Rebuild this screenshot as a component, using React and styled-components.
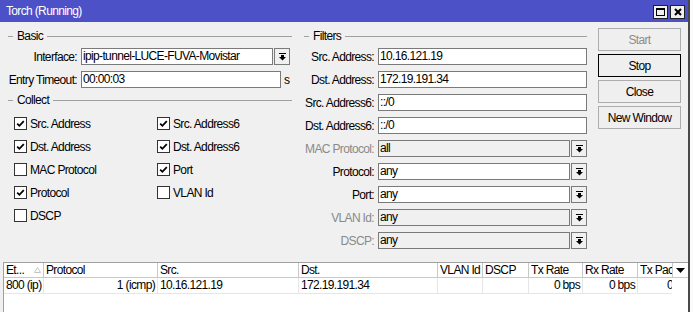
import React from "react";
import styled, { createGlobalStyle } from "styled-components";

const FONT = `"Liberation Sans", Arial, sans-serif`;

const Global = createGlobalStyle`
  html, body { margin: 0; padding: 0; background: #ffffff; }
  body { font-family: ${FONT}; font-size: 12px; letter-spacing: -0.65px; color: #000; }
  * { box-sizing: border-box; }
`;

const Screen = styled.div`
  display: flex;
  width: 693px;
  height: 312px;
  overflow: hidden;
`;

const Window = styled.div`
  width: 690px;
  height: 312px;
  display: flex;
  flex-direction: column;
  background: #f0f0f0;
  border-right: 2px solid #4a4a4a;
`;

const Outside = styled.div`
  flex: 1;
  background: #fbfbfb;
`;

const TitleBar = styled.div`
  height: 22px;
  flex: none;
  display: flex;
  align-items: center;
  justify-content: space-between;
  background: #4c51c8;
  color: #fff;
  padding: 0 3px 0 6px;
`;

const TitleText = styled.span`
  line-height: 22px;
`;

const TitleButtons = styled.div`
  display: flex;
  gap: 2px;
  margin-top: 1px;
`;

const TitleButton = styled.div`
  width: 15px;
  height: 14px;
  background: #f0f0f0;
  border: 1px solid #202020;
  display: flex;
  align-items: center;
  justify-content: center;
`;

const Body = styled.div`
  flex: 1;
  display: flex;
  flex-direction: column;
  min-height: 0;
`;

const TopArea = styled.div`
  height: 240px;
  flex: none;
  display: flex;
  padding: 7px 0 0 8px;
`;

const LeftCol = styled.div`
  width: 284px;
  display: flex;
  flex-direction: column;
`;

const FiltersCol = styled.div`
  width: 283px;
  margin-left: 12px;
  display: flex;
  flex-direction: column;
`;

const ButtonsCol = styled.div`
  width: 83px;
  margin-left: 11px;
  margin-top: -1px;
  display: flex;
  flex-direction: column;
  gap: 3px;
`;

const GroupHeader = styled.div`
  height: 14px;
  display: flex;
  align-items: center;
  margin-top: ${(p) => p.$mt ?? 0}px;
  margin-bottom: 5px;
  &::before {
    content: "";
    width: 5px;
    height: 1px;
    background: #a0a0a0;
  }
  &::after {
    content: "";
    flex: 1;
    height: 1px;
    background: #a0a0a0;
  }
`;

const GroupTitle = styled.span`
  padding: 0 4px;
  line-height: 14px;
`;

const Rows = styled.div`
  display: flex;
  flex-direction: column;
  gap: 6px;
  margin-right: ${(p) => p.$mr ?? 0}px;
`;

const FieldRow = styled.div`
  display: flex;
  align-items: center;
  height: 17px;
`;

const Label = styled.label`
  width: ${(p) => p.$w}px;
  flex: none;
  text-align: right;
  white-space: nowrap;
  margin-right: 4px;
  color: ${(p) => (p.$disabled ? "#8a8a8a" : "#000")};
`;

const Input = styled.div`
  height: 17px;
  flex: ${(p) => (p.$w ? "none" : "1")};
  width: ${(p) => (p.$w ? `${p.$w}px` : "auto")};
  border: 1px solid #7a7a7a;
  background: ${(p) => (p.$disabled ? "#f0f0f0" : "#ffffff")};
  padding: 0 1px;
  line-height: 15px;
  white-space: nowrap;
  overflow: hidden;
`;

const DropButton = styled.div`
  width: 16px;
  height: 17px;
  flex: none;
  margin-left: 1px;
  border: 1px solid #7a7a7a;
  background: #f0f0f0;
  display: flex;
  align-items: center;
  justify-content: center;
`;

const Unit = styled.span`
  margin-left: 3px;
`;

const CheckGrid = styled.div`
  display: grid;
  grid-template-columns: 143px 1fr;
  grid-auto-rows: 23px;
  padding-left: 6px;
`;

const CheckItem = styled.div`
  display: flex;
  align-items: center;
`;

const Box = styled.div`
  width: 13px;
  height: 13px;
  border: 1px solid #333333;
  background: #fff;
  display: flex;
  align-items: center;
  justify-content: center;
  margin-right: 3px;
`;

const Button = styled.div`
  height: 23px;
  display: flex;
  align-items: center;
  justify-content: center;
  background: #efefef;
  border: 1px solid ${(p) => (p.$default ? "#000000" : "#adadad")};
  color: ${(p) => (p.$disabled ? "#8c8c8c" : "#000")};
`;

const Table = styled.div`
  flex: 1;
  margin-left: 3px;
  display: flex;
  background: #ffffff;
  border-left: 1px solid #a0a0a0;
  border-top: 1px solid #a0a0a0;
  min-height: 0;
`;

const Viewport = styled.div`
  flex: 1;
  overflow: hidden;
  display: flex;
  flex-direction: column;
`;

const SideStrip = styled.div`
  width: 16px;
  flex: none;
  background: #fff;
`;

const MenuBox = styled.div`
  height: 15px;
  border-left: 1px solid #c8c8c8;
  border-bottom: 1px solid #c8c8c8;
  display: flex;
  align-items: center;
  justify-content: center;
`;

const HeaderRow = styled.div`
  display: flex;
  height: 15px;
  border-bottom: 1px solid #c8c8c8;
  width: max-content;
`;

const DataRow = styled.div`
  display: flex;
  height: 16px;
  border-bottom: 1px solid #e6e6e6;
  width: max-content;
`;

const HeadCell = styled.div`
  width: ${(p) => p.$w}px;
  flex: none;
  border-right: 1px solid #c8c8c8;
  padding: 0 2px;
  line-height: 14px;
  white-space: nowrap;
  overflow: hidden;
  display: flex;
  align-items: center;
  justify-content: space-between;
`;

const Cell = styled.div`
  width: ${(p) => p.$w}px;
  flex: none;
  border-right: 1px solid #e6e6e6;
  padding: 0 2px;
  line-height: 15px;
  white-space: nowrap;
  overflow: hidden;
  text-align: ${(p) => (p.$right ? "right" : "left")};
`;

const DropIcon = () => (
  <svg width="7" height="8" viewBox="0 0 7 8">
    <rect x="0" y="0" width="7" height="1" fill="#000" />
    <rect x="2" y="2" width="3" height="2" fill="#000" />
    <polygon points="0,4 7,4 3.5,7.6" fill="#000" />
  </svg>
);

const Tick = () => (
  <svg width="9" height="9" viewBox="0 0 9 9">
    <path d="M1.2 4.6 L3.4 6.8 L7.8 2.2" stroke="#000" strokeWidth="1.8" fill="none" />
  </svg>
);

const COLS = [
  { key: "et", title: "Et...", w: 40, sort: true },
  { key: "proto", title: "Protocol", w: 114, right: true },
  { key: "src", title: "Src.", w: 141 },
  { key: "dst", title: "Dst.", w: 139 },
  { key: "vlan", title: "VLAN Id", w: 45 },
  { key: "dscp", title: "DSCP", w: 46 },
  { key: "tx", title: "Tx Rate", w: 54, right: true },
  { key: "rx", title: "Rx Rate", w: 55, right: true },
  { key: "txp", title: "Tx Packet Rate", w: 58, right: true },
  { key: "rxp", title: "Rx Packet Rate", w: 80, right: true },
];

const ROWS = [
  {
    et: "800 (ip)",
    proto: "1 (icmp)",
    src: "10.16.121.19",
    dst: "172.19.191.34",
    vlan: "",
    dscp: "",
    tx: "0 bps",
    rx: "0 bps",
    txp: "0 pps",
    rxp: "0 pps",
  },
];

const CHECKS = [
  ["Src. Address", true],
  ["Src. Address6", true],
  ["Dst. Address", true],
  ["Dst. Address6", true],
  ["MAC Protocol", false],
  ["Port", true],
  ["Protocol", true],
  ["VLAN Id", false],
  ["DSCP", false],
];

const FILTERS = [
  { label: "Src. Address:", value: "10.16.121.19" },
  { label: "Dst. Address:", value: "172.19.191.34" },
  { label: "Src. Address6:", value: "::/0" },
  { label: "Dst. Address6:", value: "::/0" },
  { label: "MAC Protocol:", value: "all", drop: true, disabled: true },
  { label: "Protocol:", value: "any", drop: true },
  { label: "Port:", value: "any", drop: true },
  { label: "VLAN Id:", value: "any", drop: true, disabled: true },
  { label: "DSCP:", value: "any", drop: true, disabled: true },
];

export default function App() {
  return (
    <>
      <Global />
      <Screen>
        <Window>
          <TitleBar>
            <TitleText>Torch (Running)</TitleText>
            <TitleButtons>
              <TitleButton>
                <svg width="9" height="8" viewBox="0 0 9 8">
                  <rect x="0.5" y="0.5" width="8" height="7" fill="none" stroke="#000" />
                  <rect x="0" y="0" width="9" height="2" fill="#000" />
                </svg>
              </TitleButton>
              <TitleButton>
                <svg width="8" height="8" viewBox="0 0 8 8">
                  <path d="M1 1 L7 7 M7 1 L1 7" stroke="#000" strokeWidth="2" />
                </svg>
              </TitleButton>
            </TitleButtons>
          </TitleBar>
          <Body>
            <TopArea>
              <LeftCol>
                <GroupHeader>
                  <GroupTitle>Basic</GroupTitle>
                </GroupHeader>
                <Rows $mr={2}>
                  <FieldRow>
                    <Label $w={69}>Interface:</Label>
                    <Input>ipip-tunnel-LUCE-FUVA-Movistar</Input>
                    <DropButton>
                      <DropIcon />
                    </DropButton>
                  </FieldRow>
                  <FieldRow>
                    <Label $w={69}>Entry Timeout:</Label>
                    <Input $w={200}>00:00:03</Input>
                    <Unit>s</Unit>
                  </FieldRow>
                </Rows>
                <GroupHeader $mt={5}>
                  <GroupTitle>Collect</GroupTitle>
                </GroupHeader>
                <CheckGrid>
                  {CHECKS.map(([label, checked]) => (
                    <CheckItem key={label}>
                      <Box>{checked && <Tick />}</Box>
                      <span>{label}</span>
                    </CheckItem>
                  ))}
                </CheckGrid>
              </LeftCol>
              <FiltersCol>
                <GroupHeader>
                  <GroupTitle>Filters</GroupTitle>
                </GroupHeader>
                <Rows>
                  {FILTERS.map((f) => (
                    <FieldRow key={f.label}>
                      <Label $w={70} $disabled={f.disabled}>
                        {f.label}
                      </Label>
                      <Input $disabled={f.disabled}>{f.value}</Input>
                      {f.drop && (
                        <DropButton>
                          <DropIcon />
                        </DropButton>
                      )}
                    </FieldRow>
                  ))}
                </Rows>
              </FiltersCol>
              <ButtonsCol>
                <Button $disabled>Start</Button>
                <Button $default>Stop</Button>
                <Button>Close</Button>
                <Button>New Window</Button>
              </ButtonsCol>
            </TopArea>
            <Table>
              <Viewport>
                <HeaderRow>
                  {COLS.map((c) => (
                    <HeadCell key={c.key} $w={c.w}>
                      <span>{c.title}</span>
                      {c.sort && (
                        <svg width="7" height="6" viewBox="0 0 7 6">
                          <polygon points="3.5,0.5 6.5,5.5 0.5,5.5" fill="none" stroke="#c4c4c4" />
                        </svg>
                      )}
                    </HeadCell>
                  ))}
                </HeaderRow>
                {ROWS.map((r, i) => (
                  <DataRow key={i}>
                    {COLS.map((c) => (
                      <Cell key={c.key} $w={c.w} $right={c.right}>
                        {r[c.key]}
                      </Cell>
                    ))}
                  </DataRow>
                ))}
              </Viewport>
              <SideStrip>
                <MenuBox>
                  <svg width="9" height="5" viewBox="0 0 9 5">
                    <polygon points="0,0 9,0 4.5,5" fill="#000" />
                  </svg>
                </MenuBox>
              </SideStrip>
            </Table>
          </Body>
        </Window>
        <Outside />
      </Screen>
    </>
  );
}
